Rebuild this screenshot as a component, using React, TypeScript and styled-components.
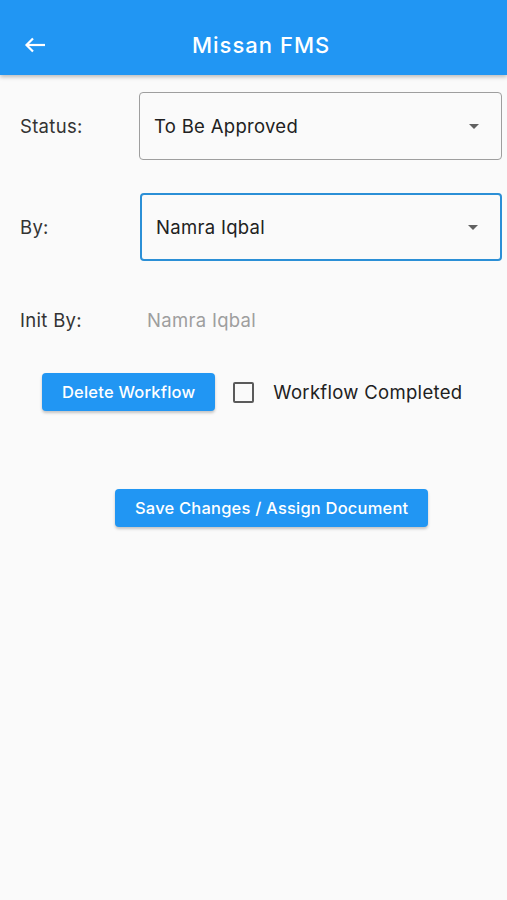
import React, { useState } from 'react';
import styled, { createGlobalStyle } from 'styled-components';

const GlobalStyle = createGlobalStyle`
  html, body {
    margin: 0;
    padding: 0;
    background: #fafafa;
    font-family: Inter, Roboto, "Noto Sans", sans-serif;
  }
`;

const Page = styled.div`
  width: 507px;
  min-height: 900px;
  background: #fafafa;
`;

const AppBar = styled.header`
  height: 75px;
  background: #2196f3;
  display: flex;
  align-items: center;
  padding: 15px 0 0 22px;
  box-sizing: border-box;
  box-shadow: 0 2px 4px rgba(0, 0, 0, 0.25);
  position: relative;
`;

const BackButton = styled.button`
  width: 26px;
  height: 26px;
  padding: 0;
  border: none;
  background: transparent;
  display: flex;
  align-items: center;
  justify-content: center;
`;

const Title = styled.h1`
  flex: 1;
  margin: 0 0 0 144px;
  font-size: 22px;
  font-weight: 500;
  color: #ffffff;
  letter-spacing: 1px;
`;

const Form = styled.div`
  padding: 17px 5px 0 20px;
  display: flex;
  flex-direction: column;
`;

const Row = styled.div<{ $gap: number; $height: number }>`
  display: grid;
  grid-template-columns: 119px 1fr;
  align-items: center;
  height: ${(p) => p.$height}px;
  margin-bottom: ${(p) => p.$gap}px;
`;

const Label = styled.span`
  font-size: 18.5px;
  color: #333333;
  letter-spacing: 0.3px;
`;

const Select = styled.div<{ $focused?: boolean }>`
  height: 68px;
  box-sizing: border-box;
  border: ${(p) => (p.$focused ? '2px solid #2b8fd6' : '1px solid #9e9e9e')};
  border-radius: 4px;
  display: flex;
  align-items: center;
  justify-content: space-between;
  padding: 0 22px 0 14px;
  font-size: 18.5px;
  color: #212121;
  letter-spacing: 0.3px;
  margin-left: ${(p) => (p.$focused ? 1 : 0)}px;
`;

const Caret = styled.span`
  width: 0;
  height: 0;
  border-left: 5px solid transparent;
  border-right: 5px solid transparent;
  border-top: 5px solid #616161;
`;

const Value = styled.span`
  font-size: 18.5px;
  color: #9e9e9e;
  margin-left: 8px;
  letter-spacing: 0.3px;
`;

const ActionRow = styled.div`
  display: flex;
  align-items: center;
  padding-left: 42px;
  margin-top: 41px;
`;

const Button = styled.button`
  height: 38px;
  padding: 0 20px;
  border: none;
  border-radius: 4px;
  background: #2196f3;
  color: #ffffff;
  font-family: Inter, Roboto, "Noto Sans", sans-serif;
  font-size: 16.5px;
  font-weight: 500;
  letter-spacing: 0.2px;
  box-shadow: 0 2px 3px rgba(0, 0, 0, 0.22);
`;

const CheckLabel = styled.label`
  display: flex;
  align-items: center;
  margin-left: 18px;
  font-size: 18.5px;
  color: #212121;
  letter-spacing: 0.3px;
`;

const Box = styled.span`
  width: 17px;
  height: 17px;
  border: 2px solid #5a5a5a;
  border-radius: 2px;
  margin-right: 19px;
`;

const SaveRow = styled.div`
  display: flex;
  padding-left: 115px;
  margin-top: 78px;
`;

export default function App() {
  const [status] = useState('To Be Approved');
  const [by] = useState('Namra Iqbal');

  return (
    <Page>
      <GlobalStyle />
      <AppBar>
        <BackButton aria-label="Back">
          <svg width="22" height="16" viewBox="0 0 22 16" fill="none" stroke="#ffffff" strokeWidth="2.2">
            <path d="M21 8H3" />
            <path d="M9 1.5L2.5 8L9 14.5" />
          </svg>
        </BackButton>
        <Title>Missan FMS</Title>
      </AppBar>
      <Form>
        <Row $height={68} $gap={33}>
          <Label>Status:</Label>
          <Select>
            {status}
            <Caret />
          </Select>
        </Row>
        <Row $height={68} $gap={47}>
          <Label>By:</Label>
          <Select $focused>
            {by}
            <Caret />
          </Select>
        </Row>
        <Row $height={24} $gap={0}>
          <Label>Init By:</Label>
          <Value>Namra Iqbal</Value>
        </Row>
      </Form>
      <ActionRow>
        <Button>Delete Workflow</Button>
        <CheckLabel>
          <Box />
          Workflow Completed
        </CheckLabel>
      </ActionRow>
      <SaveRow>
        <Button>Save Changes / Assign Document</Button>
      </SaveRow>
    </Page>
  );
}
